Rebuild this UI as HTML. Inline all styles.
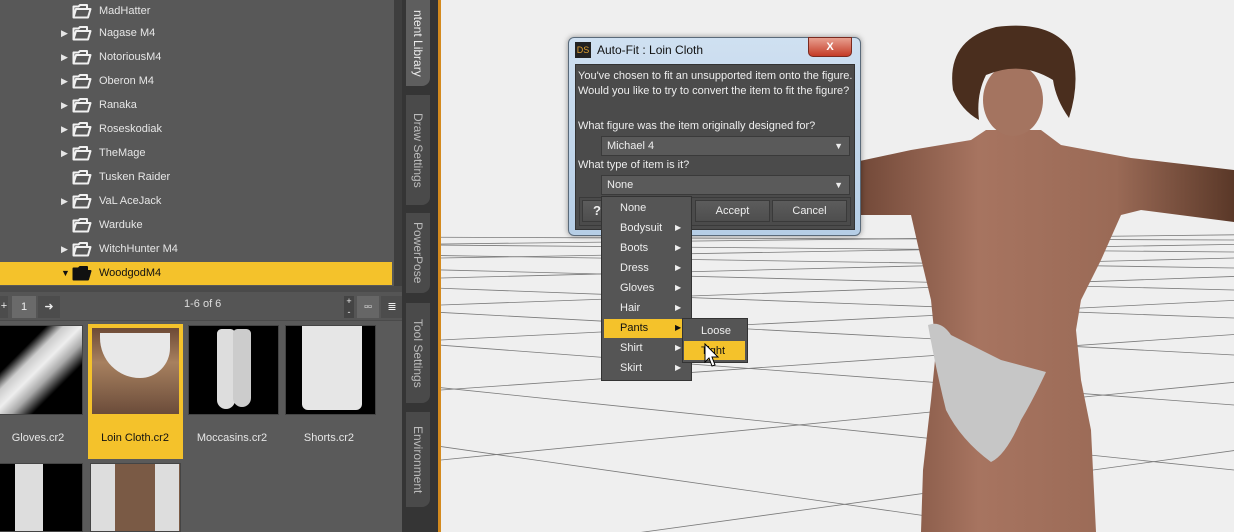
<!DOCTYPE html>
<html style="overflow:hidden;height:532px"><head><meta charset="utf-8"><style>
*{margin:0;padding:0;box-sizing:border-box}
html,body{overflow:hidden}
body{width:1234px;height:532px;background:#efefef;font-family:"Liberation Sans",sans-serif;font-size:11px;position:relative}
.abs{position:absolute}
#left{left:0;top:0;width:402px;height:532px;background:#585858;overflow:hidden}
.row{position:absolute;left:0;width:392px;height:24px;color:#e6e6e6;line-height:22px}
.row .t{position:absolute;left:99px}
.row .a{position:absolute;left:61px;top:0;font-size:9px}
.row svg{position:absolute;left:72px;top:4px}
.sel{background:#f4c22b;color:#111}
.tile{position:absolute;top:325px;width:91px;height:90px;background:#000;border:1px solid #444;overflow:hidden}
.lbl{position:absolute;top:432px;color:#e6e6e6;width:96px;text-align:center;font-size:11px}
.vt{position:absolute;left:406px;width:24px;color:#bbb;font-size:12px;writing-mode:vertical-rl;line-height:24px;background:#4a4a4a;border-radius:0 0 8px 0;text-align:center;overflow:hidden}
.mi{position:absolute;left:620px;color:#eee;font-size:11px}
.ar{position:absolute;left:675px;color:#eee;font-size:8px}
.btn{position:absolute;top:200px;height:22px;background:linear-gradient(#5c5c5c,#4e4e4e);border:1px solid #3a3a3a;color:#eee;text-align:center;line-height:20px}
</style></head><body>
<div id="left" class="abs">
<svg width="0" height="0" style="position:absolute"><defs><symbol id="f" viewBox="0 0 20 15"><path d="M1.5 13.5 V2.5 H6.5 L8 1 H15 V4.5 M1.5 13.5 L4 5 H18.5 L16 13.5 Z" stroke-width="2" stroke-linejoin="round"/></symbol></defs></svg>
<div class="row" style="top:0"><svg width="20" height="15" fill="none" stroke="#f0f0f0"><use href="#f"/></svg><span class="t">MadHatter</span></div>
<div class="row" style="top:22px"><span class="a">▶</span><svg width="20" height="15" fill="none" stroke="#f0f0f0"><use href="#f"/></svg><span class="t">Nagase M4</span></div>
<div class="row" style="top:46px"><span class="a">▶</span><svg width="20" height="15" fill="none" stroke="#f0f0f0"><use href="#f"/></svg><span class="t">NotoriousM4</span></div>
<div class="row" style="top:70px"><span class="a">▶</span><svg width="20" height="15" fill="none" stroke="#f0f0f0"><use href="#f"/></svg><span class="t">Oberon M4</span></div>
<div class="row" style="top:94px"><span class="a">▶</span><svg width="20" height="15" fill="none" stroke="#f0f0f0"><use href="#f"/></svg><span class="t">Ranaka</span></div>
<div class="row" style="top:118px"><span class="a">▶</span><svg width="20" height="15" fill="none" stroke="#f0f0f0"><use href="#f"/></svg><span class="t">Roseskodiak</span></div>
<div class="row" style="top:142px"><span class="a">▶</span><svg width="20" height="15" fill="none" stroke="#f0f0f0"><use href="#f"/></svg><span class="t">TheMage</span></div>
<div class="row" style="top:166px"><svg width="20" height="15" fill="none" stroke="#f0f0f0"><use href="#f"/></svg><span class="t">Tusken Raider</span></div>
<div class="row" style="top:190px"><span class="a">▶</span><svg width="20" height="15" fill="none" stroke="#f0f0f0"><use href="#f"/></svg><span class="t">VaL AceJack</span></div>
<div class="row" style="top:214px"><svg width="20" height="15" fill="none" stroke="#f0f0f0"><use href="#f"/></svg><span class="t">Warduke</span></div>
<div class="row" style="top:238px"><span class="a">▶</span><svg width="20" height="15" fill="none" stroke="#f0f0f0"><use href="#f"/></svg><span class="t">WitchHunter M4</span></div>
<div class="row sel" style="top:262px;height:23px"><span class="a">▼</span><svg width="20" height="15" fill="#111" stroke="#111"><use href="#f"/></svg><span class="t">WoodgodM4</span></div>
<div class="abs" style="left:394px;top:0;width:8px;height:288px;background:#3e3e3e"></div>
<div class="abs" style="left:0;top:286px;width:402px;height:6px;background:#4a4a4a"></div>
<div class="abs" style="left:0;top:292px;width:402px;height:28px;background:#555"></div>
<div class="abs" style="left:0;top:296px;width:8px;height:22px;background:#4c4c4c;color:#eee;text-align:center;line-height:20px">+</div>
<div class="abs" style="left:12px;top:296px;width:24px;height:22px;background:#6a6a6a;color:#eee;text-align:center;line-height:22px">1</div>
<div class="abs" style="left:38px;top:296px;width:22px;height:22px;background:#4c4c4c;color:#eee;text-align:center;line-height:22px">➜</div>
<div class="abs" style="left:184px;top:298px;color:#ddd">1-6 of 6</div>
<div class="abs" style="left:344px;top:296px;width:10px;height:22px;background:#444;color:#eee;font-size:9px;text-align:center;line-height:11px">+<br>-</div>
<div class="abs" style="left:357px;top:296px;width:22px;height:22px;background:#666;color:#eee;text-align:center;line-height:22px">▫▫</div>
<div class="abs" style="left:381px;top:296px;width:22px;height:22px;background:#4c4c4c;color:#eee;text-align:center;line-height:22px">≣</div>
<div class="abs" style="left:0;top:320px;width:402px;height:212px;background:#5a5a5a;border-top:1px solid #4a4a4a"></div>
<div class="abs sel" style="left:88px;top:324px;width:95px;height:135px"></div>
<div class="tile" style="left:-8px;background:linear-gradient(135deg,#000 30%,#ccc 40%,#eee 50%,#aaa 60%,#000 72%)"></div>
<div class="tile" style="left:92px;top:328px;width:87px;height:86px;border:none;background:linear-gradient(180deg,#6d4a36 0,#a7805f 40%,#6b4c3a 100%)"><div class="abs" style="left:8px;top:5px;width:70px;height:45px;background:#e8e8e8;border-radius:0 0 30px 40px"></div></div>
<div class="tile" style="left:188px;background:#000"><div class="abs" style="left:28px;top:3px;width:18px;height:80px;background:#ddd;border-radius:6px 6px 12px 12px"></div><div class="abs" style="left:44px;top:3px;width:18px;height:78px;background:#ccc;border-radius:6px 6px 12px 12px"></div></div>
<div class="tile" style="left:285px;background:#000"><div class="abs" style="left:16px;top:0;width:60px;height:84px;background:#e6e6e6;border-radius:0 0 6px 6px"></div></div>
<div class="lbl" style="left:-10px">Gloves.cr2</div>
<div class="lbl" style="left:87px;color:#111">Loin Cloth.cr2</div>
<div class="lbl" style="left:184px">Moccasins.cr2</div>
<div class="lbl" style="left:281px">Shorts.cr2</div>
<div class="tile" style="left:-8px;top:463px;height:69px"><div class="abs" style="left:22px;top:0;width:28px;height:80px;background:#ddd"></div></div>
<div class="tile" style="left:90px;top:463px;height:69px;background:#7a5a45"><div class="abs" style="left:0;top:0;width:24px;height:80px;background:#ddd"></div><div class="abs" style="left:64px;top:0;width:24px;height:80px;background:#ddd"></div></div>
</div>
<div class="abs" style="left:402px;top:0;width:36px;height:532px;background:#353535"></div>
<div class="abs" style="left:438px;top:0;width:3px;height:532px;background:#d48a1e"></div>
<div class="vt" style="top:0;height:86px;background:#5e5e5e;color:#eee">ntent Library</div>
<div class="vt" style="top:95px;height:110px">Draw Settings</div>
<div class="vt" style="top:213px;height:80px">PowerPose</div>
<div class="vt" style="top:303px;height:100px">Tool Settings</div>
<div class="vt" style="top:412px;height:95px">Environment</div>
<svg class="abs" style="left:441px;top:0" width="793" height="532">
<g stroke="#7a7a7a" stroke-width="0.8" fill="none">
<line x1="-1500" y1="232" x2="793" y2="240"/><line x1="-1500" y1="232" x2="793" y2="252"/><line x1="-1500" y1="232" x2="793" y2="268"/><line x1="-1500" y1="232" x2="793" y2="290"/><line x1="-1500" y1="232" x2="793" y2="318"/><line x1="-1500" y1="232" x2="793" y2="355"/><line x1="-1500" y1="232" x2="793" y2="405"/><line x1="-1500" y1="232" x2="793" y2="470"/><line x1="-1500" y1="232" x2="793" y2="560"/>
<line x1="2500" y1="215" x2="0" y2="244"/><line x1="2500" y1="215" x2="0" y2="258"/><line x1="2500" y1="215" x2="0" y2="278"/><line x1="2500" y1="215" x2="0" y2="305"/><line x1="2500" y1="215" x2="0" y2="340"/><line x1="2500" y1="215" x2="0" y2="390"/><line x1="2500" y1="215" x2="0" y2="460"/><line x1="2500" y1="215" x2="0" y2="560"/><line x1="2500" y1="215" x2="0" y2="700"/>
</g>
<defs><linearGradient id="sk" x1="0" x2="1"><stop offset="0" stop-color="#6a4232"/><stop offset=".35" stop-color="#a77460"/><stop offset=".7" stop-color="#9a6a56"/><stop offset="1" stop-color="#5a3828"/></linearGradient></defs>
<path d="M400 165 L470 150 L530 140 L545 130 L600 130 L620 145 L690 158 L793 170 L793 222 L700 210 L680 215 L660 260 L640 300 L635 330 L640 380 L650 430 L655 532 L480 532 L482 470 L490 400 L495 350 L490 300 L478 250 L470 215 L400 215 Z" fill="url(#sk)"/>
<ellipse cx="572" cy="100" rx="30" ry="36" fill="#a47460"/>
<path d="M512 90 Q505 40 555 27 Q610 20 630 50 Q640 80 628 118 Q615 100 612 80 Q580 60 545 75 Q535 95 538 120 Q520 110 512 90 Z" fill="#4a2e1e"/>
<path d="M487 325 Q500 320 510 335 L560 360 L605 372 Q592 400 580 420 Q565 455 550 462 Q520 440 505 410 Q495 370 487 325 Z" fill="#c6c6c6"/>
</svg>
<div class="abs" style="left:568px;top:37px;width:293px;height:199px;background:linear-gradient(#cfe0f1,#b6cee6);border:1px solid #5a6a7a;border-radius:6px;box-shadow:0 0 6px rgba(0,0,0,.4)"></div>
<div class="abs" style="left:575px;top:42px;width:16px;height:16px;background:#222;color:#e0a030;font-size:9px;line-height:16px;text-align:center">DS</div>
<div class="abs" style="left:597px;top:43px;font-size:12px;color:#111">Auto-Fit : Loin Cloth</div>
<div class="abs" style="left:808px;top:37px;width:44px;height:20px;background:linear-gradient(#e8a090,#c43b26);border:1px solid #7a2a20;border-radius:0 0 5px 5px;color:#fff;text-align:center;font-weight:bold;line-height:18px">X</div>
<div class="abs" style="left:575px;top:64px;width:280px;height:166px;background:#4b4b4b;border:1px solid #333"></div>
<div class="abs" style="left:578px;top:69px;color:#eee;line-height:14.5px">You've chosen to fit an unsupported item onto the figure.<br>Would you like to try to convert the item to fit the figure?</div>
<div class="abs" style="left:578px;top:120px;color:#eee">What figure was the item originally designed for?</div>
<div class="abs" style="left:601px;top:136px;width:249px;height:20px;background:#5a5a5a;border:1px solid #3a3a3a;color:#eee;padding-left:5px;line-height:18px">Michael 4<span style="position:absolute;right:6px;font-size:9px">▼</span></div>
<div class="abs" style="left:578px;top:159px;color:#eee">What type of item is it?</div>
<div class="abs" style="left:601px;top:175px;width:249px;height:20px;background:#5a5a5a;border:1px solid #3a3a3a;color:#eee;padding-left:5px;line-height:18px">None<span style="position:absolute;right:6px;font-size:9px">▼</span></div>
<div class="abs" style="left:579px;top:197px;width:272px;height:29px;border:1px solid #3a3a3a"></div>
<div class="btn" style="left:582px;width:30px;font-weight:bold;font-size:13px">?</div>
<div class="btn" style="left:695px;width:75px">Accept</div>
<div class="btn" style="left:772px;width:75px">Cancel</div>
<div class="abs" style="left:601px;top:196px;width:91px;height:185px;background:#555;border:1px solid #333"></div>
<div class="abs" style="left:604px;top:319px;width:80px;height:19px;background:#f4c22b"></div>
<div class="mi" style="top:202px">None</div>
<div class="mi" style="top:222px">Bodysuit</div><div class="ar" style="top:223px">▶</div>
<div class="mi" style="top:242px">Boots</div><div class="ar" style="top:243px">▶</div>
<div class="mi" style="top:262px">Dress</div><div class="ar" style="top:263px">▶</div>
<div class="mi" style="top:282px">Gloves</div><div class="ar" style="top:283px">▶</div>
<div class="mi" style="top:302px">Hair</div><div class="ar" style="top:303px">▶</div>
<div class="mi" style="top:322px;color:#111">Pants</div><div class="ar" style="top:323px;color:#111">▶</div>
<div class="mi" style="top:342px">Shirt</div><div class="ar" style="top:343px">▶</div>
<div class="mi" style="top:362px">Skirt</div><div class="ar" style="top:363px">▶</div>
<div class="abs" style="left:682px;top:318px;width:66px;height:45px;background:#555;border:1px solid #333"></div>
<div class="abs" style="left:684px;top:341px;width:61px;height:19px;background:#f4c22b"></div>
<div class="abs" style="left:701px;top:325px;color:#eee">Loose</div>
<div class="abs" style="left:701px;top:345px;color:#111">Tight</div>
<svg class="abs" style="left:704px;top:343px" width="16" height="26"><path d="M1 1 L1 19 L5 15 L8 23 L11 22 L8 14 L14 14 Z" fill="#fff" stroke="#000"/></svg>
</body></html>
